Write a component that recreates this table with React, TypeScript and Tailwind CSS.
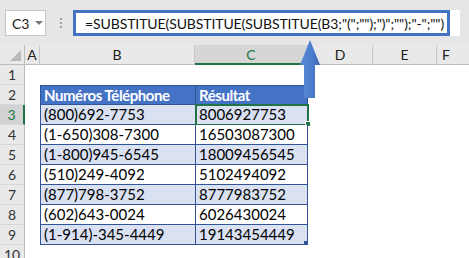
import React from "react";

const rows: { n: number; b: string; c: string }[] = [
  { n: 3, b: "(800)692-7753", c: "8006927753" },
  { n: 4, b: "(1-650)308-7300", c: "16503087300" },
  { n: 5, b: "(1-800)945-6545", c: "18009456545" },
  { n: 6, b: "(510)249-4092", c: "5102494092" },
  { n: 7, b: "(877)798-3752", c: "8777983752" },
  { n: 8, b: "(602)643-0024", c: "6026430024" },
  { n: 9, b: "(1-914)-345-4449", c: "19143454449" },
];

const formula = '=SUBSTITUE(SUBSTITUE(SUBSTITUE(B3;"(";"");")";"");"-";"")';

function RowHead({ n, active }: { n: number; active?: boolean }) {
  return (
    <div
      className={
        "w-[25px] shrink-0 h-full flex items-center justify-center border-b border-[#d8d8d8] text-[14px] " +
        (active
          ? "bg-[#d3d3d3] text-[#217346] border-r-2 border-r-[#217346]"
          : "bg-[#e9e9e9] text-[#333] border-r border-r-[#bcbcbc]")
      }
    >
      {n}
    </div>
  );
}

export default function App() {
  return (
    <div className="relative w-[469px] h-[258px] overflow-hidden bg-white font-['Lato',sans-serif] text-black">
      {/* toolbar: name box + formula bar */}
      <div className="h-[45px] bg-[#e6e6e6] flex items-start pt-[10px]">
        <div className="ml-[5px] w-[41px] h-[26px] bg-white border border-[#c6c6c6] flex items-center pl-[6px] text-[14px] text-[#222]">
          <span>C3</span>
          <span className="ml-[6px] w-0 h-0 border-l-[4px] border-r-[4px] border-t-[4px] border-l-transparent border-r-transparent border-t-[#7a7a7a]" />
        </div>
        <div className="ml-[14px] mt-[8px] flex flex-col gap-[2px]">
          <span className="w-[2px] h-[2px] bg-[#a0a0a0]" />
          <span className="w-[2px] h-[2px] bg-[#a0a0a0]" />
          <span className="w-[2px] h-[2px] bg-[#a0a0a0]" />
        </div>
        <div className="ml-[11px] w-[387px] h-[26px] bg-white flex">
          <div className="w-[377px] h-full border-[3px] border-[#4472c4] flex items-center pl-[9px] text-[14px] tracking-[-0.1px] text-[#111] whitespace-nowrap">
            {formula}
          </div>
        </div>
      </div>

      {/* column headers */}
      <div className="h-[20px] flex bg-[#e9e9e9] text-[14px] text-[#222]">
        <div className="w-[25px] shrink-0 relative border-r border-[#bcbcbc] border-b border-b-[#bcbcbc]">
          <div className="absolute right-[3px] bottom-[3px] w-0 h-0 border-l-[11px] border-t-[11px] border-l-transparent border-t-transparent border-b-0 border-r-0 border-r-transparent [border-bottom:0] [border-right:11px_solid_#b9b9b9]" />
        </div>
        <div className="w-[15px] shrink-0 flex items-center justify-center border-r border-[#c8c8c8] border-b border-b-[#bcbcbc]">A</div>
        <div className="w-[155px] shrink-0 flex items-center justify-center border-r border-[#c8c8c8] border-b border-b-[#bcbcbc]">B</div>
        <div className="w-[113px] shrink-0 flex items-center justify-center bg-[#d6d6d6] text-[#217346] border-r border-[#c8c8c8] border-b-2 border-b-[#217346]">C</div>
        <div className="w-[65px] shrink-0 flex items-center justify-center border-r border-[#c8c8c8] border-b border-b-[#bcbcbc]">D</div>
        <div className="w-[64px] shrink-0 flex items-center justify-center border-r border-[#c8c8c8] border-b border-b-[#bcbcbc]">E</div>
        <div className="flex-1 flex items-center pl-[5px] border-b border-b-[#bcbcbc]">F</div>
      </div>

      {/* row 1 */}
      <div className="h-[20px] flex">
        <RowHead n={1} />
      </div>

      {/* row 2: table header */}
      <div className="h-[20px] flex text-[15px]">
        <RowHead n={2} />
        <div className="w-[15px] shrink-0" />
        <div className="w-[155px] shrink-0 bg-[#4472c4] text-white font-bold tracking-[-0.45px] border-l border-t border-b border-[#2f5597] flex items-center pl-[3px]">
          Numéros Téléphone
        </div>
        <div className="w-[113px] shrink-0 bg-[#4472c4] text-white font-bold tracking-[-0.45px] border-l border-r border-t border-b border-[#2f5597] flex items-center pl-[3px]">
          Résultat
        </div>
      </div>

      {/* data rows */}
      {rows.map((r, i) => {
        const fill = i % 2 === 0 ? "bg-[#d9e1f2]" : "bg-white";
        return (
          <div key={r.n} className="h-[20px] flex text-[15px]">
            <RowHead n={r.n} active={r.n === 3} />
            <div className="w-[15px] shrink-0" />
            <div className={"w-[155px] shrink-0 border-l border-b border-[#2f5597] flex items-center pl-[3px] " + fill}>
              {r.b}
            </div>
            <div className={"relative w-[113px] shrink-0 border-l border-r border-b border-[#2f5597] flex items-center pl-[3px] " + fill}>
              {r.c}
              {r.n === 3 && (
                <>
                  <div className="absolute -left-[1px] -top-[1px] w-[114px] h-[22px] border-2 border-[#217346]" />
                  <div className="absolute -right-[4px] bottom-[-3px] w-[6px] h-[6px] bg-[#217346] border border-white" />
                </>
              )}
              {r.n === 9 && (
                <div className="absolute right-[-1px] bottom-[-1px] w-[4px] h-[4px] bg-[#2f5597]" />
              )}
            </div>
          </div>
        );
      })}

      {/* row 10 */}
      <div className="h-[20px] flex">
        <RowHead n={10} />
      </div>

      {/* arrow pointing from the result column up to the formula */}
      <svg className="absolute left-[299px] top-[40px]" width="22" height="60" viewBox="0 0 22 60">
        <defs>
          <linearGradient id="arrowFill" x1="0" y1="0" x2="1" y2="0">
            <stop offset="0" stopColor="#5b8ad6" />
            <stop offset="0.6" stopColor="#4a7bcd" />
            <stop offset="1" stopColor="#3d68b3" />
          </linearGradient>
        </defs>
        <path d="M11 0 L21 25 L16 25 L16 58 L5 58 L5 25 L1 25 Z" fill="url(#arrowFill)" />
      </svg>
    </div>
  );
}
